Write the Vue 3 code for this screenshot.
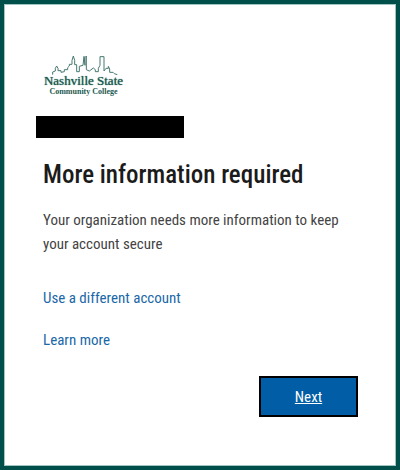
<script setup>
const title = "More information required";
const message =
	"Your organization needs more information to keep your account secure";
const links = ["Use a different account", "Learn more"];
</script>

<template>
	<main class="page">
		<section class="panel">
			<div class="logo">
				<svg class="logo__skyline" viewBox="0 0 240 60" aria-hidden="true">
					<path
						d="M26 59V51L34 48V40L38 33L42 40V47H51V52L61 50V44H71V38L76 33V28H84V16L88 3L92 16V29H98V50H106V34L117 31L120 4L123 31V8L127 3V44L136 48L148 39L154 44V50H163V40L168 31V5H180V48L186 40H193V34L197 42V52H207L211 56L220 59"
					/>
				</svg>
				<div class="logo__name">Nashville State</div>
				<div class="logo__sub">Community College</div>
			</div>
			<div class="identity"></div>
			<h1 class="title">{{ title }}</h1>
			<p class="message">{{ message }}</p>
			<a v-for="link in links" :key="link" class="link" href="#">{{ link }}</a>
			<div class="actions">
				<button class="next" type="button">Next</button>
			</div>
		</section>
	</main>
</template>

<style>
body {
	margin: 0;
}
</style>

<style scoped>
.page {
	box-sizing: border-box;
	min-height: 100vh;
	display: flex;
	padding: 4px 4px 5px;
	background: #004f4b;
	font-family: "Roboto Condensed", Roboto, sans-serif;
	font-size: 15px;
	line-height: 24px;
	color: #444;
}

.panel {
	box-sizing: border-box;
	flex: 1;
	display: flex;
	flex-direction: column;
	align-items: flex-start;
	padding: 50px 37px 48px 38px;
	background: #fff;
	border: 1px solid #9fc4c1;
}

.logo {
	display: flex;
	flex-direction: column;
	align-items: center;
	width: 81px;
	color: #1d5a4f;
	font-family: "Liberation Serif", serif;
	white-space: nowrap;
}

.logo__skyline {
	display: block;
	width: 80px;
	height: 20px;
	fill: none;
	stroke: #47796f;
	stroke-width: 3;
}

.logo__name {
	font-size: 13px;
	font-weight: 400;
	line-height: 12px;
	text-shadow: 0 0 1px #1d5a4f;
}

.logo__sub {
	font-size: 8px;
	font-weight: 700;
	line-height: 10px;
}

.identity {
	width: 148px;
	height: 22px;
	margin: 19px 0 0 -7px;
	background: #000;
}

.title {
	margin: 20px 0 0;
	font-size: 25px;
	font-weight: 500;
	line-height: 34px;
	color: #1b1b1b;
}

.message {
	margin: 16px 0 0;
}

.link {
	margin-top: 30px;
	color: #1a68a8;
	text-decoration: none;
}

.link + .link {
	margin-top: 18px;
}

.actions {
	align-self: stretch;
	display: flex;
	justify-content: flex-end;
	margin-top: 24px;
}

.next {
	min-width: 99px;
	height: 41px;
	border: 2px solid #000;
	background: #005da6;
	color: #fff;
	font: inherit;
	text-decoration: underline;
}
</style>
